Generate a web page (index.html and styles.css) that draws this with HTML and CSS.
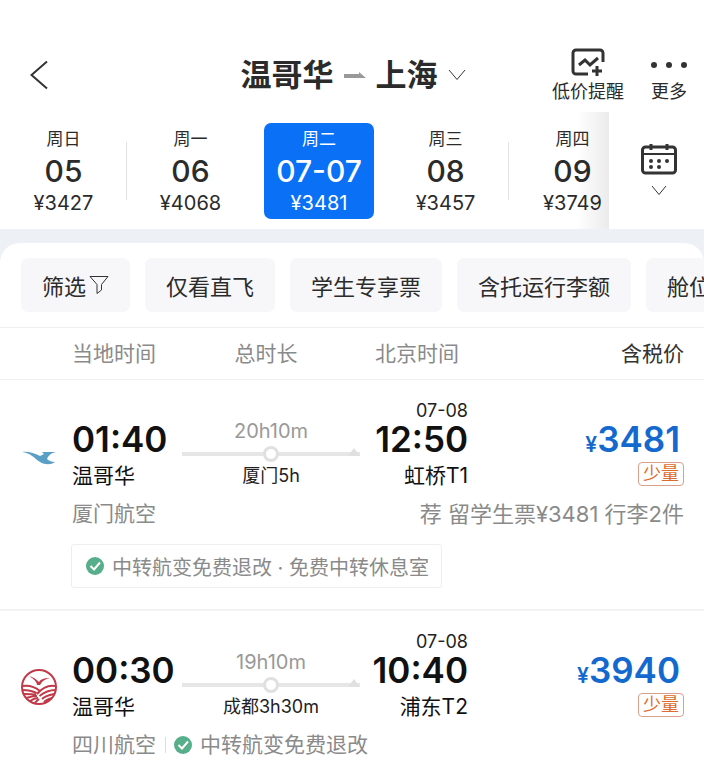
FILE: index.html
```html
<!DOCTYPE html>
<html lang="zh-CN">
<head>
    <meta charset="UTF-8">
    <meta name="viewport" content="width=device-width, initial-scale=1.0">
    <title>温哥华 - 上海</title>
    <link rel="stylesheet" href="styles.css">
</head>
<body>
    <header class="topbar">
        <button class="back" aria-label="返回">
            <svg width="18" height="30" viewBox="0 0 18 30"><path d="M17 1.500L1.500 15L17 28.500"/></svg>
        </button>
        <button class="route">
            <span>温哥华</span>
            <svg class="route-arrow" width="22" height="8" viewBox="0 0 22 8"><path d="M0 3h15V1l7 6H0z"/></svg>
            <span>上海</span>
            <svg class="chevron" width="18" height="12" viewBox="0 0 18 12"><path d="M1 1l8 9.500L17 1"/></svg>
        </button>
        <div class="actions">
            <button class="action">
                <svg width="34" height="30" viewBox="0 0 34 30"><path d="M32 14V5a3 3 0 0 0-3-3H5a3 3 0 0 0-3 3v18a3 3 0 0 0 3 3h12"/><path d="M8 17l6-5 5 5 8-7M26 18v10M21 23h10"/></svg>
                <span>低价提醒</span>
            </button>
            <button class="action more">
                <svg width="38" height="30" viewBox="0 0 38 30"><circle cx="4" cy="17" r="3"/><circle cx="19" cy="17" r="3"/><circle cx="34" cy="17" r="3"/></svg>
                <span>更多</span>
            </button>
        </div>
    </header>

    <nav class="calendar">
        <div class="days">
            <button class="day split"><span>周日</span><b>05</b><span class="fare">¥3427</span></button>
            <button class="day"><span>周一</span><b>06</b><span class="fare">¥4068</span></button>
            <button class="day active"><span>周二</span><b>07-07</b><span class="fare">¥3481</span></button>
            <button class="day split"><span>周三</span><b>08</b><span class="fare">¥3457</span></button>
            <button class="day"><span>周四</span><b>09</b><span class="fare">¥3749</span></button>
        </div>
        <button class="pick-date" aria-label="选择日期">
            <svg width="38" height="34" viewBox="0 0 38 34">
                <rect x="2.500" y="5" width="33" height="26" rx="3"/>
                <path d="M11 2v6M27 2v6"/>
                <path class="thin" d="M3 12h32"/>
                <path class="dots" d="M11 19h0M19 19h0M27 19h0M11 25h0M19 25h0"/>
            </svg>
            <svg class="chevron" width="16" height="11" viewBox="0 0 16 11"><path d="M1 1l7 8.500L15 1"/></svg>
        </button>
    </nav>

    <main class="results">
        <div class="panel">
            <div class="filters">
                <button class="chip">筛选<svg width="20" height="20" viewBox="0 0 20 20"><path d="M1 1.500h18l-6.500 8V15L8 18.500v-9z"/></svg></button>
                <button class="chip">仅看直飞</button>
                <button class="chip">学生专享票</button>
                <button class="chip">含托运行李额</button>
                <button class="chip">舱位</button>
            </div>

            <div class="columns grid">
                <span class="col-depart">当地时间</span>
                <span class="col-total">总时长</span>
                <span class="col-arrive">北京时间</span>
                <span class="col-price">含税价</span>
            </div>

            <article class="flight">
                <div class="grid">
                    <svg class="logo" width="34" height="38" viewBox="0 0 34 38"><path d="M0 17C6 16 12 18 18 21L22 19L20 17H34C29 18 26 21 25 24C27 26 30 27 33 27C29 30 23 30 18 27C12 23 9 18 0 17z"/></svg>
                    <div class="depart">
                        <strong class="time">01:40</strong>
                        <span class="place">温哥华</span>
                    </div>
                    <div class="leg">
                        <span class="duration">20h10m</span>
                        <div class="track"><i class="stop"></i></div>
                        <span class="via">厦门5h</span>
                    </div>
                    <div class="arrive">
                        <span class="date">07-08</span>
                        <strong class="time">12:50</strong>
                        <span class="place">虹桥T1</span>
                    </div>
                    <div class="price">
                        <strong class="amount"><small>¥</small>3481</strong>
                        <span class="tag">少量</span>
                    </div>
                </div>
                <div class="info">
                    <span>厦门航空</span>
                    <span class="offer">荐 留学生票¥3481 行李2件</span>
                </div>
                <div class="benefit">
                    <svg class="check" width="18" height="18" viewBox="0 0 18 18"><circle cx="9" cy="9" r="9"/><path d="M4.500 9l3.500 3.500 6-7"/></svg>
                    <span>中转航变免费退改 · 免费中转休息室</span>
                </div>
            </article>

            <article class="flight">
                <div class="grid">
                    <svg class="logo sichuan" width="36" height="38" viewBox="0 0 36 38">
                        <circle class="ring" cx="18" cy="19" r="17"/>
                        <path d="M8 8c4 1 7 3 10 6 2-3 5-4 11-4-4 1-6 2-8 4l-2 3h-3c0-3-3-6-8-9z"/>
                        <path class="wave" d="M2 18c6-1 12 1 17 5M34 18c-6-1-12 1-18 8M1.500 22c6 0 10 1 14 3M34.500 22c-6 0-11 2-16 6M3 26c5 0 8 0 12 1M33 26c-5 1-9 2-12 5M5 30c4-1 7-2 11-2M31 30c-3 1-6 2-8 4M9 33c3-2 5-3 8-3M14 35c1-2 3-3 4-4"/>
                    </svg>
                    <div class="depart">
                        <strong class="time">00:30</strong>
                        <span class="place">温哥华</span>
                    </div>
                    <div class="leg">
                        <span class="duration">19h10m</span>
                        <div class="track"><i class="stop"></i></div>
                        <span class="via">成都3h30m</span>
                    </div>
                    <div class="arrive">
                        <span class="date">07-08</span>
                        <strong class="time">10:40</strong>
                        <span class="place">浦东T2</span>
                    </div>
                    <div class="price">
                        <strong class="amount"><small>¥</small>3940</strong>
                        <span class="tag">少量</span>
                    </div>
                </div>
                <div class="info">
                    <span>四川航空</span>
                    <span class="note">
                        <svg class="check" width="18" height="18" viewBox="0 0 18 18"><circle cx="9" cy="9" r="9"/><path d="M4.500 9l3.500 3.500 6-7"/></svg>
                        中转航变免费退改
                    </span>
                </div>
            </article>
        </div>
    </main>
</body>
</html>
```
FILE: styles.css
```css
* {
    box-sizing: border-box;
}
body {
    margin: 0;
    font-family: Inter, "Noto Sans CJK SC", sans-serif;
    color: #2b2b2b;
    background: #fff;
    overflow-x: hidden;
}
button {
    padding: 0;
    border: 0;
    background: none;
    font: inherit;
    color: inherit;
    cursor: pointer;
}
svg {
    display: block;
    flex: none;
    fill: none;
    stroke: #333;
    stroke-width: 2;
}

/* header */
.topbar {
    display: grid;
    grid-template-columns: 1fr auto 1fr;
    align-items: center;
    height: 112px;
    padding: 38px 16px 0 18px;
}
.back {
    justify-self: start;
    padding-left: 12px;
}
.route {
    display: flex;
    align-items: center;
    gap: 10px;
    font-size: 31px;
    font-weight: 700;
    line-height: 40px;
}
.route-arrow {
    fill: #999;
    stroke: none;
}
.chevron {
    stroke-width: 1;
}
.actions {
    display: flex;
    justify-self: end;
    gap: 26px;
    padding-top: 4px;
}
.action {
    display: flex;
    flex-direction: column;
    align-items: center;
    font-size: 18px;
    line-height: 28px;
}
.action path {
    stroke-width: 3;
}
.more circle {
    fill: #333;
    stroke: none;
}

/* date strip */
.calendar {
    display: flex;
    height: 117px;
}
.days {
    position: relative;
    display: flex;
    flex: 1;
    align-items: center;
    overflow: hidden;
}
.days::after {
    content: "";
    position: absolute;
    top: 0;
    right: 0;
    width: 32px;
    height: 100%;
    background: linear-gradient(to right, rgba(0, 0, 0, 0), rgba(0, 0, 0, 0.08));
}
.day {
    display: flex;
    flex: 0 0 127px;
    flex-direction: column;
    align-items: center;
    padding: 2px 0;
    font-size: 17px;
    line-height: 28px;
}
.day b {
    font-size: 30px;
    font-weight: 500;
    line-height: 36px;
}
.fare {
    font-size: 20px;
}
.split {
    background: linear-gradient(#e2e2e2, #e2e2e2) right center / 1px 58px no-repeat;
}
.active {
    flex-basis: 110px;
    margin: 0 8px 0 10px;
    border-radius: 7px;
    background: #0a70f5;
    color: #fff;
}
.pick-date {
    display: flex;
    flex: 0 0 95px;
    flex-direction: column;
    align-items: center;
    gap: 9px;
    padding: 30px 0 0 5px;
}
.pick-date rect,
.pick-date path {
    stroke-width: 3;
}
.pick-date .thin {
    stroke-width: 2;
}
.pick-date .dots {
    stroke-width: 4;
    stroke-linecap: round;
}
.pick-date .chevron path {
    stroke-width: 1;
}

/* results */
.results {
    padding-top: 14px;
    background: #edf1f5;
}
.panel {
    border-radius: 20px 20px 0 0;
    background: #fff;
}
.filters {
    display: flex;
    gap: 15px;
    overflow: hidden;
    padding: 15px 0 15px 21px;
    border-bottom: 1px solid #f0f0f0;
}
.chip {
    display: flex;
    flex: none;
    align-items: center;
    gap: 3px;
    height: 54px;
    padding: 0 21px;
    border-radius: 7px;
    background: #f7f7fa;
    font-size: 22px;
}
.chip svg {
    stroke-width: 1;
}
.grid {
    display: grid;
    grid-template-columns: 50px 110fr 178fr 108fr 216fr;
}
.columns {
    padding: 0 20px 0 22px;
    border-bottom: 1px solid #f0f0f0;
    color: #8a8a8a;
    font-size: 21px;
    line-height: 51px;
}
.col-depart {
    grid-column: 2;
}
.col-total {
    padding-right: 10px;
    text-align: center;
}
.col-arrive {
    padding-left: 15px;
    white-space: nowrap;
}
.col-price {
    color: #333;
    text-align: right;
}

/* flight */
.flight {
    padding: 21px 20px 21px 22px;
    border-bottom: 2px solid #f2f2f2;
}
.logo {
    align-self: end;
    margin-bottom: 22px;
    fill: #5a9fc6;
    stroke: none;
}
.sichuan {
    margin-bottom: 20px;
    margin-left: -1px;
    fill: #c03a48;
}
.sichuan .ring,
.sichuan .wave {
    fill: none;
    stroke: #c03a48;
    stroke-width: 2;
}
.depart,
.leg,
.arrive,
.price {
    display: flex;
    flex-direction: column;
    justify-content: flex-end;
    white-space: nowrap;
}
.arrive,
.price {
    align-items: flex-end;
}
.time,
.amount {
    color: #111;
    font-size: 35px;
    font-weight: 600;
    line-height: 36px;
}
.date {
    color: #222;
    font-size: 18px;
    line-height: 20px;
}
.place {
    color: #111;
    font-size: 21px;
    line-height: 38px;
}
.leg {
    align-items: center;
    padding-bottom: 7px;
}
.duration {
    color: #999;
    font-size: 20px;
    line-height: 26px;
}
.track {
    display: flex;
    align-items: center;
    justify-content: center;
    position: relative;
    width: 100%;
    height: 20px;
    background: linear-gradient(#e6e6e6, #e6e6e6) center / 100% 4px no-repeat;
}
.track::after {
    content: "";
    position: absolute;
    right: 0;
    bottom: 8px;
    border-bottom: 8px solid #e0e0e0;
    border-left: 6px solid transparent;
    border-right: 6px solid transparent;
}
.stop {
    width: 16px;
    height: 16px;
    border: 3px solid #e0e0e0;
    border-radius: 50%;
    background: #fff;
}
.via {
    color: #222;
    font-size: 18px;
    line-height: 24px;
}
.price {
    padding-bottom: 9px;
}
.amount {
    padding-right: 4px;
    color: #1469cf;
}
.amount small {
    font-size: 21px;
    line-height: 1;
}
.tag {
    margin-top: 5px;
    padding: 0 4px;
    border: 1px solid #d9a08c;
    border-radius: 4px;
    color: #dd6b2c;
    font-size: 18px;
    line-height: 22px;
}
.info {
    display: flex;
    align-items: center;
    padding-left: 50px;
    color: #8a8a8a;
    font-size: 21px;
    line-height: 38px;
}
.offer {
    margin-left: auto;
    font-size: 22px;
}
.note {
    display: flex;
    align-items: center;
    gap: 8px;
}
.note::before {
    content: "";
    width: 1px;
    height: 16px;
    margin-left: 9px;
    background: #ddd;
}
.check {
    fill: #57ae8a;
    stroke: none;
}
.check path {
    fill: none;
    stroke: #fff;
    stroke-width: 2;
}
.benefit {
    display: flex;
    align-items: center;
    gap: 8px;
    width: fit-content;
    height: 44px;
    margin: 11px 0 0 49px;
    padding: 0 12px 0 14px;
    border: 1px solid #eee;
    border-radius: 3px;
    color: #8a8a8a;
    font-size: 20px;
}
```
